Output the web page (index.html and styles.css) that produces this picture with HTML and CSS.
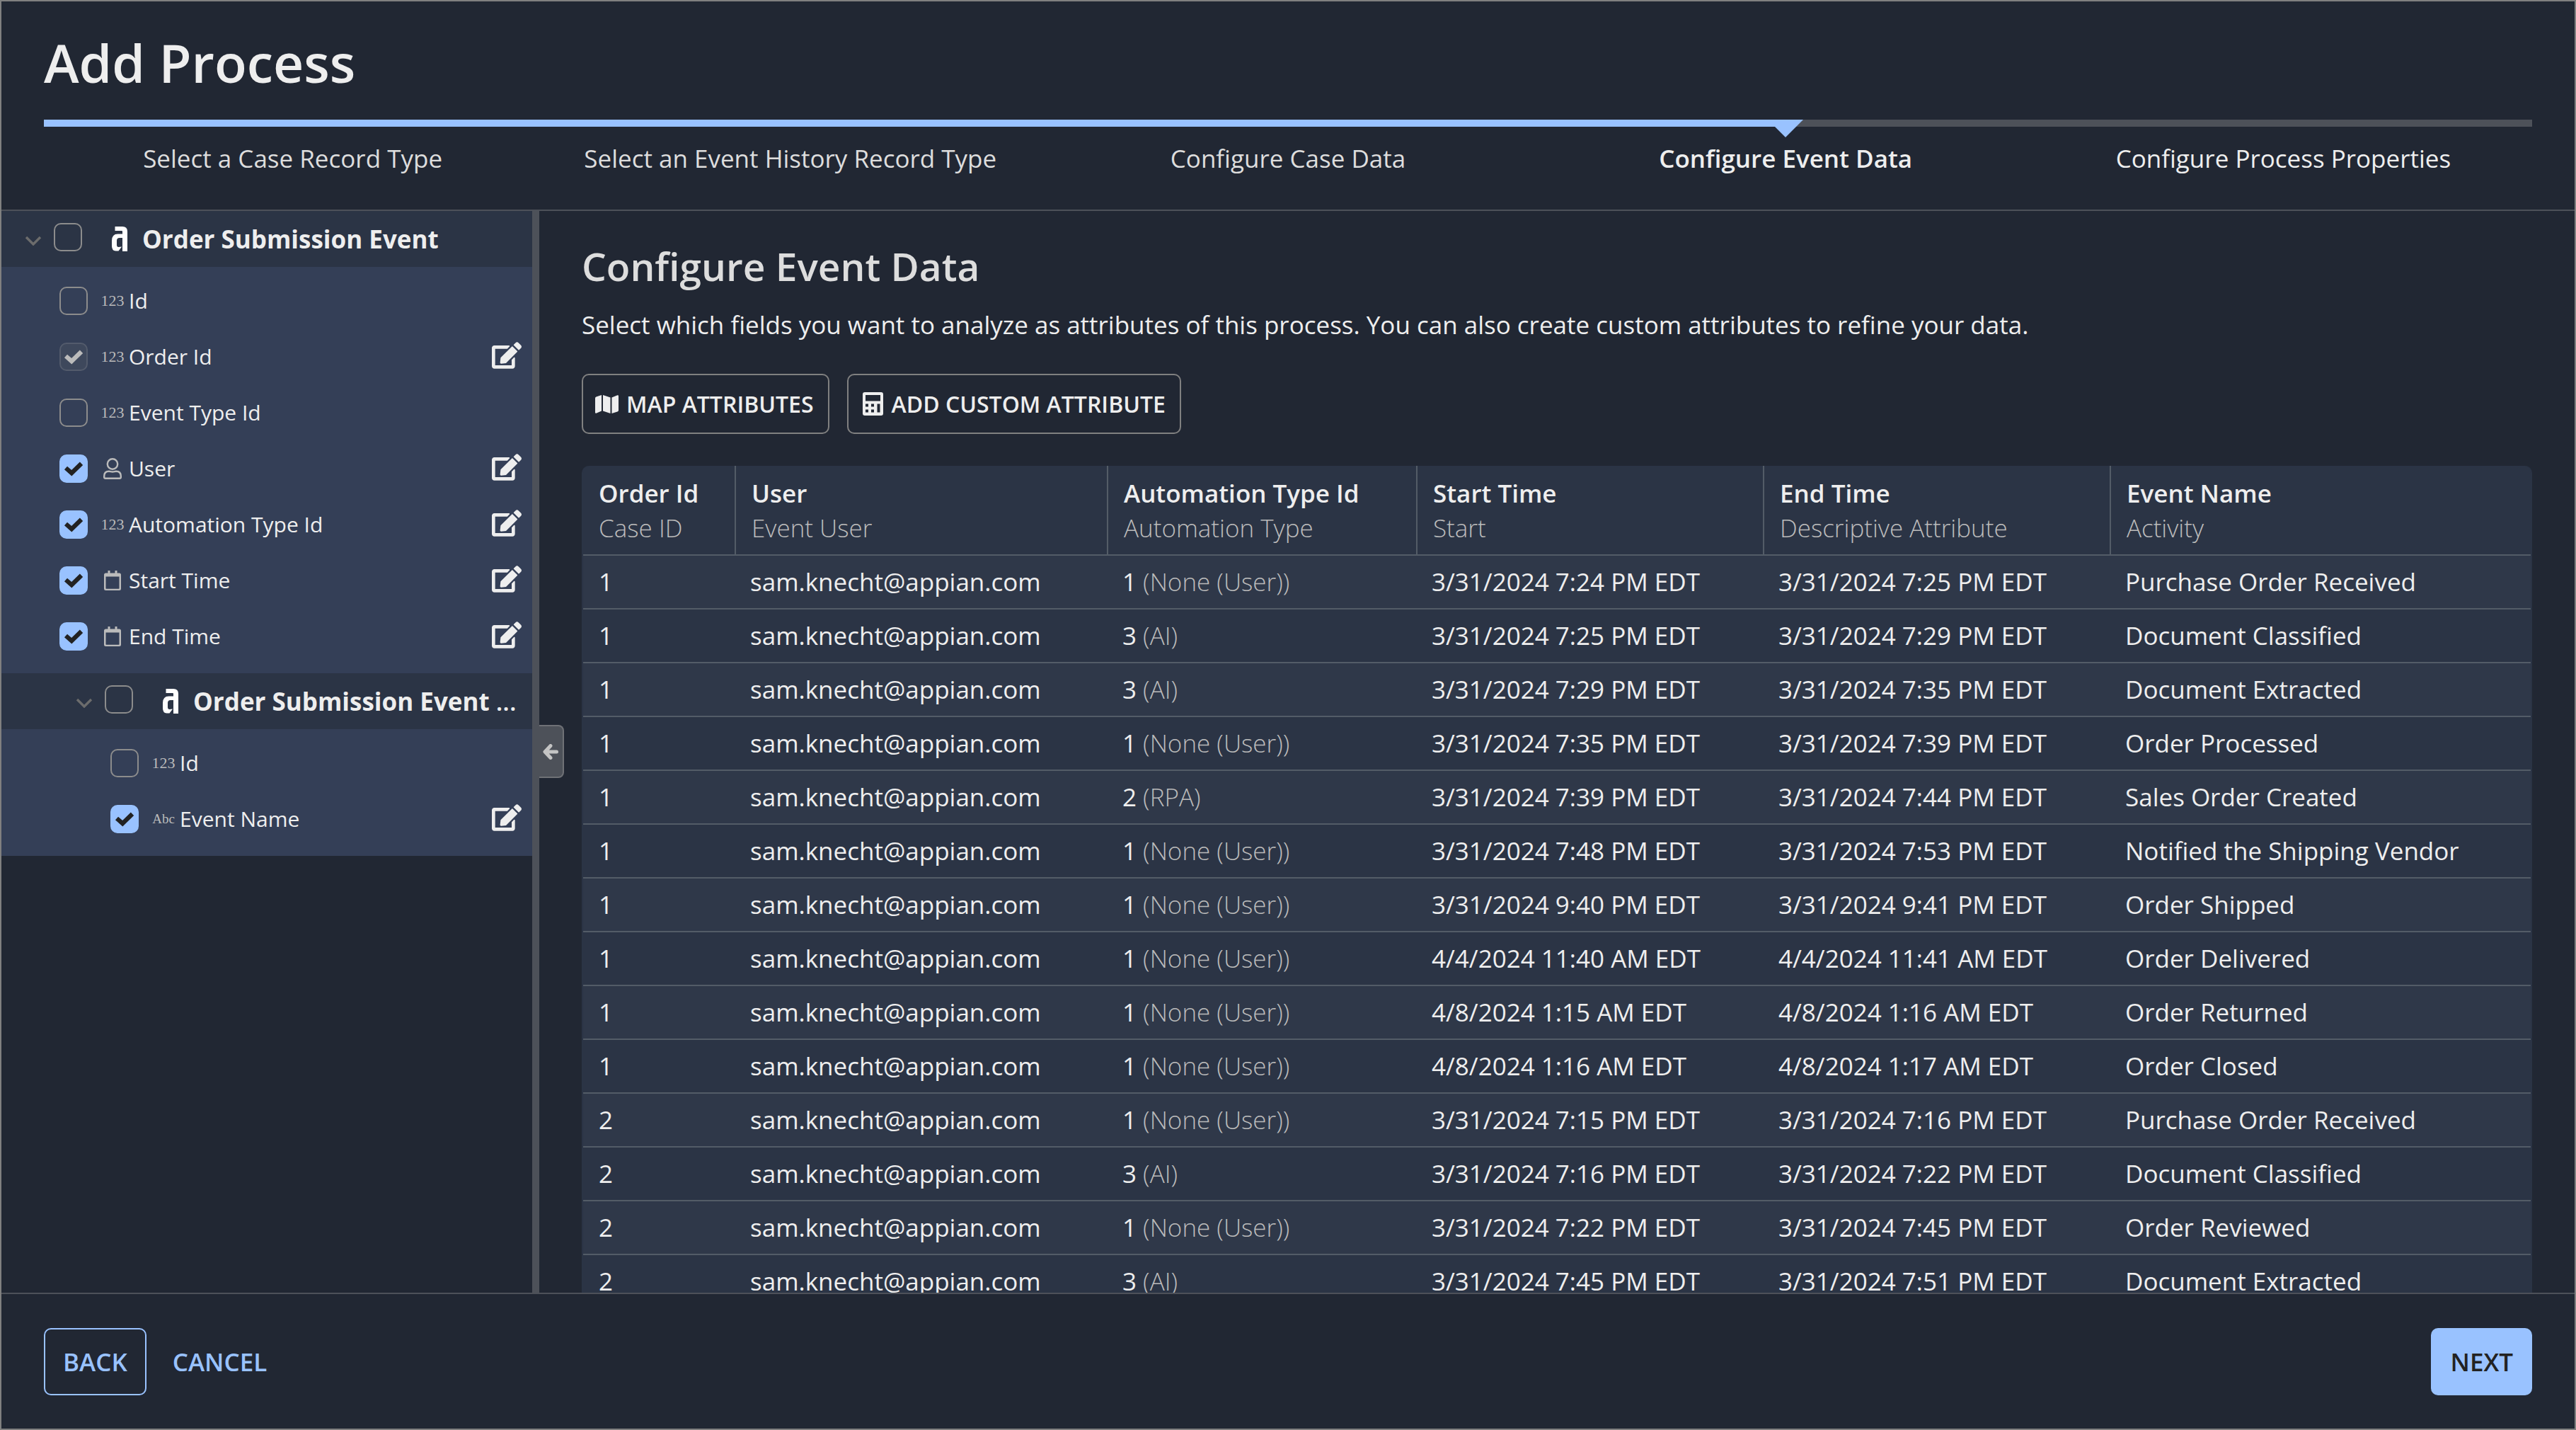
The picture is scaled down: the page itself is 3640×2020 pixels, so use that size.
FILE: index.html
```html
<!DOCTYPE html>
<html lang="en">
<head>
<meta charset="utf-8">
<title>Add Process</title>
<link rel="stylesheet" href="styles.css">
</head>
<body>
<svg class="defs" aria-hidden="true">
  <symbol id="i-chevron" viewBox="0 0 24 14"><path d="M2 2l10 10L22 2" fill="none" stroke="currentColor" stroke-width="3.4"/></symbol>
  <symbol id="i-record" viewBox="0 0 22 35"><path d="M4.500 0H15q7 0 7 7V35H15V16H11Q7 16 7 20V26Q7 29 9.500 29L14 28.500 9.500 34.500H5.500Q0 34 0 27.500V20Q0 10.500 8.500 10.500H15V7Q15 6 14 6H4.500Z" fill="currentColor"/></symbol>
  <symbol id="i-user" viewBox="0 0 26 30"><g fill="none" stroke="currentColor" stroke-width="2.400"><circle cx="13" cy="8.500" r="7.200"/><path d="M8 18.700C3.500 18.700 1.200 21.500 1.200 25.500V27q0 1.800 1.800 1.800H23q1.800 0 1.800-1.800V25.500C24.800 21.500 22.500 18.700 18 18.700 16 18.700 15.500 19.500 13 19.500S10 18.700 8 18.700Z"/></g></symbol>
  <symbol id="i-calendar" viewBox="0 0 26 28"><path d="M6.500 0H9.500V3.500H16.500V0H19.500V3.500H22.500Q25 3.500 25 6V25.500Q25 28 22.500 28H3.500Q1 28 1 25.500V6Q1 3.500 3.500 3.500H6.500ZM3.500 8.500V25Q3.500 25.700 4.200 25.700H21.800Q22.500 25.700 22.500 25V8.500Z" fill="currentColor" fill-rule="evenodd"/></symbol>
  <symbol id="i-edit" viewBox="0 0 576 512"><path fill="currentColor" d="M402.600 83.200l90.200 90.200c3.800 3.800 3.800 10 0 13.800L274.400 405.600l-92.800 10.300c-12.400 1.400-22.900-9.100-21.500-21.500l10.300-92.800L388.800 83.200c3.800-3.800 10-3.800 13.800 0zm162-22.900l-48.800-48.800c-15.200-15.200-39.900-15.200-55.200 0l-35.400 35.400c-3.800 3.800-3.800 10 0 13.800l90.200 90.200c3.800 3.800 10 3.800 13.800 0l35.400-35.400c15.200-15.300 15.200-40 0-55.200zM384 346.200V448H64V128h229.800c3.200 0 6.200-1.300 8.500-3.500l40-40c7.600-7.600 2.200-20.500-8.500-20.500H48C21.500 64 0 85.500 0 112v352c0 26.500 21.500 48 48 48h352c26.500 0 48-21.500 48-48V306.200c0-10.700-12.900-16-20.500-8.500l-40 40c-2.200 2.300-3.500 5.300-3.500 8.500z"/></symbol>
</svg>
<div class="dialog">
  <header class="top">
    <h1>Add Process</h1>
    <div class="progress"><div class="progress-fill"></div></div>
    <ol class="steps">
      <li>Select a Case Record Type</li>
      <li>Select an Event History Record Type</li>
      <li>Configure Case Data</li>
      <li class="current" aria-current="step">Configure Event Data</li>
      <li class="next-step">Configure Process Properties</li>
    </ol>
  </header>

  <div class="body">
    <aside class="sidebar">
      <div class="group-head">
        <button class="toggle" aria-label="Collapse Order Submission Event"><svg class="chevron"><use href="#i-chevron"/></svg></button>
        <input type="checkbox" id="g1"><svg class="record"><use href="#i-record"/></svg><label for="g1">Order Submission Event</label>
      </div>
      <ul class="fields">
        <li><input type="checkbox" id="f1"><span class="type">123</span><label for="f1">Id</label></li>
        <li><input type="checkbox" id="f2" checked disabled><span class="type">123</span><label for="f2">Order Id</label><button class="edit" aria-label="Edit Order Id"><svg><use href="#i-edit"/></svg></button></li>
        <li><input type="checkbox" id="f3"><span class="type">123</span><label for="f3">Event Type Id</label></li>
        <li><input type="checkbox" id="f4" checked><span class="type"><svg class="user"><use href="#i-user"/></svg></span><label for="f4">User</label><button class="edit" aria-label="Edit User"><svg><use href="#i-edit"/></svg></button></li>
        <li><input type="checkbox" id="f5" checked><span class="type">123</span><label for="f5">Automation Type Id</label><button class="edit" aria-label="Edit Automation Type Id"><svg><use href="#i-edit"/></svg></button></li>
        <li><input type="checkbox" id="f6" checked><span class="type"><svg class="calendar"><use href="#i-calendar"/></svg></span><label for="f6">Start Time</label><button class="edit" aria-label="Edit Start Time"><svg><use href="#i-edit"/></svg></button></li>
        <li><input type="checkbox" id="f7" checked><span class="type"><svg class="calendar"><use href="#i-calendar"/></svg></span><label for="f7">End Time</label><button class="edit" aria-label="Edit End Time"><svg><use href="#i-edit"/></svg></button></li>
      </ul>
      <div class="group-head nested">
        <button class="toggle" aria-label="Collapse Order Submission Event"><svg class="chevron"><use href="#i-chevron"/></svg></button>
        <input type="checkbox" id="g2"><svg class="record"><use href="#i-record"/></svg><label for="g2">Order Submission Event <span class="more">...</span></label>
      </div>
      <ul class="fields nested">
        <li><input type="checkbox" id="f8"><span class="type">123</span><label for="f8">Id</label></li>
        <li><input type="checkbox" id="f9" checked><span class="type abc">Abc</span><label for="f9">Event Name</label><button class="edit" aria-label="Edit Event Name"><svg><use href="#i-edit"/></svg></button></li>
      </ul>
    </aside>

    <div class="divider">
      <button class="collapse" aria-label="Collapse panel"><svg viewBox="0 0 22 22"><path d="M19.500 11H4M11 2.500L3 11l8 8.500" fill="none" stroke="currentColor" stroke-width="5" stroke-linecap="round" stroke-linejoin="round"/></svg></button>
    </div>

    <main class="content">
      <h2>Configure Event Data</h2>
      <p>Select which fields you want to analyze as attributes of this process. You can also create custom attributes to refine your data.</p>
      <div class="actions">
        <button class="outline"><svg class="map" viewBox="0 0 33 26"><g fill="currentColor"><path d="M0 4.500Q0 3 1.500 2.500L9 0V22.500L1.500 25.700Q0 26 0 24.500Z"/><path d="M11 0L21.500 3.500V26L11 22.500Z"/><path d="M23.500 3.500L31.500 .300Q33 0 33 1.500V21.500Q33 23 31.500 23.500L23.500 26Z"/></g></svg>MAP ATTRIBUTES</button>
        <button class="outline"><svg class="calc" viewBox="0 0 29 33"><path fill="currentColor" fill-rule="evenodd" d="M3 0H26Q29 0 29 3V30Q29 33 26 33H3Q0 33 0 30V3Q0 0 3 0ZM4 4V12.500H25V4ZM4 16.500V20.500H8V16.500ZM12 16.500V20.500H16V16.500ZM20.500 16.500V28.500H24.500V16.500ZM4 24.500V28.500H8V24.500ZM12 24.500V28.500H16V24.500Z"/></svg>ADD CUSTOM ATTRIBUTE</button>
      </div>
      <table>
        <colgroup><col class="c-id"><col class="c-user"><col class="c-auto"><col class="c-time"><col class="c-time"><col></colgroup>
        <thead>
          <tr>
            <th>Order Id<small>Case ID</small></th>
            <th>User<small>Event User</small></th>
            <th>Automation Type Id<small>Automation Type</small></th>
            <th>Start Time<small>Start</small></th>
            <th>End Time<small>Descriptive Attribute</small></th>
            <th>Event Name<small>Activity</small></th>
          </tr>
        </thead>
        <tbody>
          <tr><td>1</td><td>sam.knecht@appian.com</td><td>1 <i>(None (User))</i></td><td>3/31/2024 7:24 PM EDT</td><td>3/31/2024 7:25 PM EDT</td><td>Purchase Order Received</td></tr>
          <tr><td>1</td><td>sam.knecht@appian.com</td><td>3 <i>(AI)</i></td><td>3/31/2024 7:25 PM EDT</td><td>3/31/2024 7:29 PM EDT</td><td>Document Classified</td></tr>
          <tr><td>1</td><td>sam.knecht@appian.com</td><td>3 <i>(AI)</i></td><td>3/31/2024 7:29 PM EDT</td><td>3/31/2024 7:35 PM EDT</td><td>Document Extracted</td></tr>
          <tr><td>1</td><td>sam.knecht@appian.com</td><td>1 <i>(None (User))</i></td><td>3/31/2024 7:35 PM EDT</td><td>3/31/2024 7:39 PM EDT</td><td>Order Processed</td></tr>
          <tr><td>1</td><td>sam.knecht@appian.com</td><td>2 <i>(RPA)</i></td><td>3/31/2024 7:39 PM EDT</td><td>3/31/2024 7:44 PM EDT</td><td>Sales Order Created</td></tr>
          <tr><td>1</td><td>sam.knecht@appian.com</td><td>1 <i>(None (User))</i></td><td>3/31/2024 7:48 PM EDT</td><td>3/31/2024 7:53 PM EDT</td><td>Notified the Shipping Vendor</td></tr>
          <tr><td>1</td><td>sam.knecht@appian.com</td><td>1 <i>(None (User))</i></td><td>3/31/2024 9:40 PM EDT</td><td>3/31/2024 9:41 PM EDT</td><td>Order Shipped</td></tr>
          <tr><td>1</td><td>sam.knecht@appian.com</td><td>1 <i>(None (User))</i></td><td>4/4/2024 11:40 AM EDT</td><td>4/4/2024 11:41 AM EDT</td><td>Order Delivered</td></tr>
          <tr><td>1</td><td>sam.knecht@appian.com</td><td>1 <i>(None (User))</i></td><td>4/8/2024 1:15 AM EDT</td><td>4/8/2024 1:16 AM EDT</td><td>Order Returned</td></tr>
          <tr><td>1</td><td>sam.knecht@appian.com</td><td>1 <i>(None (User))</i></td><td>4/8/2024 1:16 AM EDT</td><td>4/8/2024 1:17 AM EDT</td><td>Order Closed</td></tr>
          <tr><td>2</td><td>sam.knecht@appian.com</td><td>1 <i>(None (User))</i></td><td>3/31/2024 7:15 PM EDT</td><td>3/31/2024 7:16 PM EDT</td><td>Purchase Order Received</td></tr>
          <tr><td>2</td><td>sam.knecht@appian.com</td><td>3 <i>(AI)</i></td><td>3/31/2024 7:16 PM EDT</td><td>3/31/2024 7:22 PM EDT</td><td>Document Classified</td></tr>
          <tr><td>2</td><td>sam.knecht@appian.com</td><td>1 <i>(None (User))</i></td><td>3/31/2024 7:22 PM EDT</td><td>3/31/2024 7:45 PM EDT</td><td>Order Reviewed</td></tr>
          <tr><td>2</td><td>sam.knecht@appian.com</td><td>3 <i>(AI)</i></td><td>3/31/2024 7:45 PM EDT</td><td>3/31/2024 7:51 PM EDT</td><td>Document Extracted</td></tr>
        </tbody>
      </table>
    </main>
  </div>

  <footer class="footer">
    <button class="btn back">BACK</button>
    <button class="btn cancel">CANCEL</button>
    <button class="btn next">NEXT</button>
  </footer>
</div>
</body>
</html>
```
FILE: styles.css
```css
:root {
  --bg: #212733;
  --panel: #2b3445;
  --row: #2f3849;
  --fields: #343f57;
  --line: #4d5159;
  --rule: #535c67;
  --text: #eeeeee;
  --muted: #bbbbbb;
  --accent: #99c2ff;
}

* { box-sizing: border-box; }

body {
  margin: 0;
  background: var(--bg);
  color: var(--text);
  font: 400 35px/49px "Open Sans", sans-serif;
}

button {
  margin: 0;
  padding: 0;
  border: 0;
  background: none;
  color: inherit;
  font: inherit;
}

svg { display: block; flex: none; }
.defs { position: absolute; width: 0; height: 0; }

.dialog {
  display: flex;
  flex-direction: column;
  height: 100vh;
  border: 2px solid #808080;
}

/* Header and step rail */
.top {
  flex: none;
  padding: 34px 60px 48px;
  border-bottom: 2px solid var(--line);
}

h1 {
  margin: 0 0 29px;
  font-size: 75px;
  line-height: 104px;
  font-weight: 600;
}

.progress { height: 10px; background: var(--line); }

.progress-fill {
  position: relative;
  width: 70%;
  height: 10px;
  background: var(--accent);
}

.progress-fill::after {
  content: "";
  position: absolute;
  top: 0;
  right: -25px;
  border: 25px solid transparent;
  border-top-color: var(--accent);
  border-bottom: 0;
}

.steps {
  display: grid;
  grid-template-columns: repeat(5, 1fr);
  margin: 0;
  padding: 20px 0 0;
  list-style: none;
  text-align: center;
  color: #dddddd;
}

.steps .current { color: var(--text); font-weight: 600; }
.steps .next-step { color: var(--text); }

.body { display: flex; flex: 1; min-height: 0; }

input[type="checkbox"] {
  appearance: none;
  flex: none;
  width: 40px;
  height: 40px;
  margin: 0;
  border: 2px solid #8c8c8c;
  border-radius: 10px;
}

input[type="checkbox"]:checked {
  border-color: var(--accent);
  background: var(--accent) url("data:image/svg+xml,%3Csvg xmlns='http://www.w3.org/2000/svg' viewBox='0 0 40 40'%3E%3Cpath d='M9 19l8.200 7.200L31 12.700' fill='none' stroke='%23222' stroke-width='6.200'/%3E%3C/svg%3E") center / 40px 40px;
}

input[type="checkbox"]:disabled {
  border-color: #535b6c;
  background: #3e485c url("data:image/svg+xml,%3Csvg xmlns='http://www.w3.org/2000/svg' viewBox='0 0 40 40'%3E%3Cpath d='M9 19l8.200 7.200L31 12.700' fill='none' stroke='%23bbb' stroke-width='6.200'/%3E%3C/svg%3E") center / 40px 40px;
}

/* Field tree */
.sidebar { flex: none; width: 750px; }

.group-head {
  display: flex;
  align-items: center;
  height: 79px;
  padding-left: 33px;
  background: var(--panel);
  font-weight: 700;
}

.group-head.nested { padding-left: 105px; }
.toggle { padding-top: 4px; color: #6c6c6c; }
.chevron { width: 24px; height: 14px; }
.group-head input[type="checkbox"] { margin: 0 42px 5px 17px; }
.record { width: 22px; height: 35px; margin-right: 21px; color: #ffffff; }
.more { font-weight: 600; }

.fields {
  margin: 0;
  padding: 8px 15px 13px 82px;
  background: var(--fields);
  list-style: none;
  font-size: 30px;
  line-height: 44px;
}

.fields.nested { padding-left: 154px; }
.fields li { display: flex; align-items: center; height: 79px; }

.type {
  display: flex;
  justify-content: center;
  width: 34px;
  margin: 0 6px 0 18px;
  color: var(--muted);
  font: 22px/30px "Liberation Serif", serif;
}

.type.abc { font-size: 19px; }
.user { width: 26px; height: 30px; }
.calendar { width: 26px; height: 28px; }
.edit { margin: 0 0 3px auto; }
.edit svg { width: 42px; height: 38px; }

/* Divider with its collapse tab */
.divider { position: relative; flex: none; width: 10px; background: var(--line); }

.collapse {
  position: absolute;
  z-index: 1;
  top: 50%;
  left: 100%;
  display: grid;
  place-items: center;
  width: 35px;
  height: 75px;
  margin-top: -38px;
  padding-right: 2px;
  border: 2px solid #6f7176;
  border-left: 0;
  border-radius: 0 8px 8px 0;
  background: var(--line);
  color: #c4c4c4;
}

.collapse svg { width: 22px; height: 22px; }

/* Main area */
.content {
  flex: 1;
  min-width: 0;
  padding: 40px 60px 0;
  overflow: hidden;
}

h2 {
  margin: 0 0 20px;
  color: #dddddd;
  font-size: 55px;
  line-height: 76px;
  font-weight: 600;
}

p { margin: 0 0 45px; }
.actions { display: flex; gap: 25px; margin-bottom: 45px; }

.outline {
  display: flex;
  align-items: center;
  height: 85px;
  padding: 0 20px 0 17px;
  border: 2px solid #808080;
  border-radius: 10px;
  font-size: 32px;
  line-height: 44px;
  font-weight: 600;
}

.map { width: 33px; height: 26px; margin-right: 11px; }
.calc { width: 29px; height: 33px; margin: 0 12px 0 3px; }

table {
  width: 100%;
  table-layout: fixed;
  border: 2px solid var(--panel);
  border-top: 0;
  border-radius: 10px 10px 0 0;
  border-spacing: 0;
  background: var(--panel);
  text-align: left;
}

.c-id { width: 214px; }
.c-user { width: 526px; }
.c-auto { width: 437px; }
.c-time { width: 490px; }

th { padding: 14px 22px 13px; font-weight: 600; }

th + th {
  border-left: 2px solid var(--rule);
}

small { display: block; color: var(--muted); font-size: 35px; font-weight: 300; }
td { padding: 12px 22px 13px; border-top: 2px solid var(--rule); white-space: nowrap; }
tbody tr:nth-child(odd) { background: var(--row); }
i { color: var(--muted); font-style: normal; font-weight: 300; }

/* Footer */
.footer {
  display: flex;
  flex: none;
  padding: 48px 60px 47px;
  border-top: 2px solid var(--line);
}

.btn {
  height: 95px;
  padding: 0 25px;
  border: 2px solid transparent;
  border-radius: 10px;
  color: var(--accent);
  font-weight: 600;
}

.back { border-color: var(--accent); }
.cancel { padding: 0 11px; margin-left: 24px; }
.next { margin-left: auto; background: var(--accent); color: #222222; }
```
